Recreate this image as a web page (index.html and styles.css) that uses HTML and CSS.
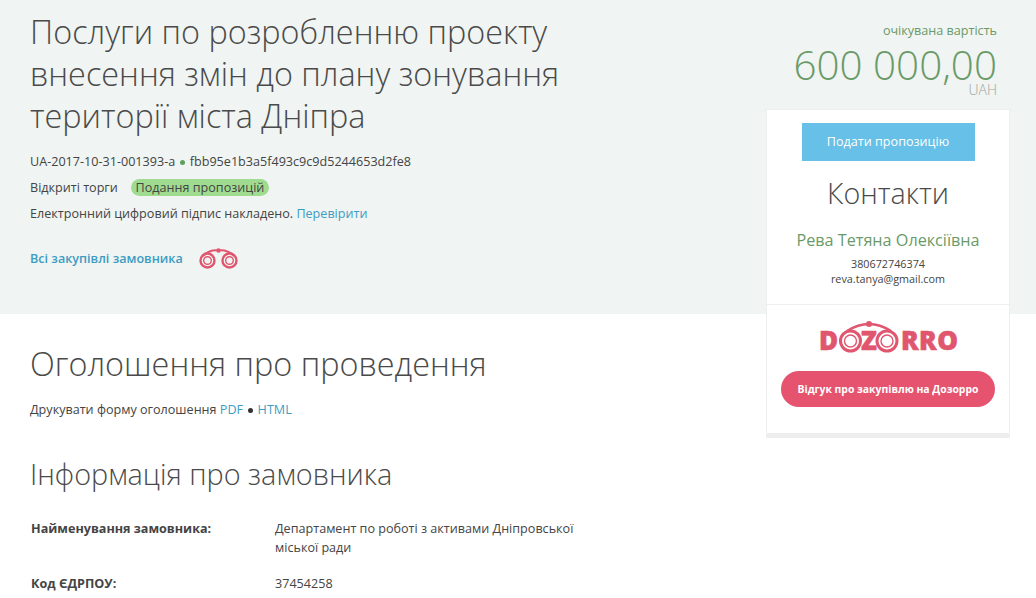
FILE: index.html
```html
<!DOCTYPE html>
<html lang="uk">
<head>
  <meta charset="UTF-8">
  <title>Послуги по розробленню проекту</title>
  <link rel="stylesheet" href="styles.css">
</head>
<body>

<header class="tender-head">
  <div class="tender-info">
    <h1>Послуги по розробленню проекту внесення змін до плану зонування території міста Дніпра</h1>
    <p class="line">UA-2017-10-31-001393-a <span class="dot"></span> fbb95e1b3a5f493c9c9d5244653d2fe8</p>
    <p class="line">Відкриті торги <span class="status">Подання пропозицій</span></p>
    <p class="line">Електронний цифровий підпис накладено. <a href="#">Перевірити</a></p>
    <p class="buyer-link">
      <a href="#">Всі закупівлі замовника</a>
      <svg class="bino" width="40" height="22" viewBox="0 0 40 22" fill="none" stroke="#e0566f">
        <path d="M4 9 C9 4 15 3 19.500 3.500 C24 3 30 4 35 9" stroke-width="2"/>
        <circle cx="19.500" cy="3.500" r="2.200" fill="#e0566f" stroke="none"/>
        <circle cx="8.500" cy="13.500" r="7" stroke-width="2.400"/>
        <circle cx="8.500" cy="13.500" r="3.800" stroke-width="1.400"/>
        <circle cx="30.500" cy="13.500" r="7" stroke-width="2.400"/>
        <circle cx="30.500" cy="13.500" r="3.800" stroke-width="1.400"/>
      </svg>
    </p>
  </div>

  <aside class="side">
    <div class="price">
      <div class="price-label">очікувана вартість</div>
      <div class="price-value">600 000,00</div>
      <div class="price-cur">UAH</div>
    </div>
    <div class="card">
      <div class="card-top">
        <a class="btn-blue" href="#">Подати пропозицію</a>
        <h2>Контакти</h2>
        <div class="contact-name">Рева Тетяна Олексіївна</div>
        <div class="contact-line">380672746374</div>
        <div class="contact-line">reva.tanya@gmail.com</div>
      </div>
      <div class="card-bottom">
        <svg class="logo" width="138" height="34" viewBox="0 0 138 34">
          <g class="logo-text">
            <text x="0" y="30">D</text>
            <text x="42" y="30">Z</text>
            <text class="logo-end" x="82" y="30">RRO</text>
          </g>
          <g fill="none" stroke="#e0566f">
            <path d="M28 11 C36 6 44 4 50 4 C56 4 64 6 72 11" stroke-width="2.400"/>
            <circle cx="31.500" cy="21" r="10" stroke-width="3"/>
            <circle cx="31.500" cy="21" r="6" stroke-width="1.400"/>
            <circle cx="68" cy="21" r="10" stroke-width="3"/>
            <circle cx="68" cy="21" r="6" stroke-width="1.400"/>
          </g>
          <circle cx="50" cy="4" r="3" fill="#e0566f"/>
        </svg>
        <a class="btn-pink" href="#">Відгук про закупівлю на Дозорро</a>
      </div>
    </div>
  </aside>
</header>

<main class="content">
  <h2 class="big">Оголошення про проведення</h2>
  <p class="print">Друкувати форму оголошення <a href="#">PDF</a> <span class="dot dark"></span> <a href="#">HTML</a></p>

  <h3 class="mid">Інформація про замовника</h3>
  <div class="row">
    <div class="row-label">Найменування замовника:</div>
    <div class="row-value">Департамент по роботі з активами Дніпровської міської ради</div>
  </div>
  <div class="row">
    <div class="row-label">Код ЄДРПОУ:</div>
    <div class="row-value">37454258</div>
  </div>
</main>

</body>
</html>
```

FILE: styles.css
```css
html, body {
  height: 100%;
  overflow: hidden;
}
body {
  margin: 0;
  font-family: "Open Sans", sans-serif;
  font-size: 12.6px;
  color: #444;
  background-color: #fff;
}
a {
  color: #3d9cc4;
  text-decoration: none;
}
.tender-head {
  display: flex;
  justify-content: space-between;
  align-items: flex-start;
  height: 314px;
  padding: 0 26px 0 30px;
  box-sizing: border-box;
  background-color: #f0f4f2;
}
.tender-info {
  width: 560px;
  padding-top: 10px;
}
.tender-info h1 {
  margin: 0 0 17px;
  font-size: 32.4px;
  font-weight: 300;
  line-height: 42px;
  color: #4a4a4a;
}
.line {
  margin: 0 0 8px;
  line-height: 18px;
}
.dot {
  display: inline-block;
  width: 5px;
  height: 5px;
  margin: 0 1.500px 1px;
  border-radius: 50%;
  background-color: #5ba25e;
}
.dot.dark {
  background-color: #333;
}
.status {
  margin-left: 10px;
  padding: 0 4.500px;
  border-radius: 9px;
  background-color: #a0dc90;
  display: inline-block;
  line-height: 17px;
}
.buyer-link {
  display: flex;
  align-items: center;
  gap: 16px;
  margin: 24px 0 0;
  font-weight: 600;
}
.side {
  width: 244px;
}
.price {
  text-align: right;
  padding: 22px 13px 0 0;
  color: #6a9a68;
}
.price-label {
  font-size: 12.6px;
  line-height: 18px;
}
.price-value {
  margin-top: 6px;
  font-size: 40.4px;
  font-weight: 300;
  line-height: 38px;
}
.price-cur {
  color: #9aa69c;
  font-size: 14px;
  font-weight: 300;
  line-height: 12px;
}
.card {
  margin-top: 13px;
  background-color: #fff;
  border: 1px solid #eeeeee;
  border-bottom-width: 5px;
  text-align: center;
}
.card-top {
  padding: 13px 0 18px;
  border-bottom: 1px solid #eee;
}
.btn-blue {
  display: block;
  width: 173px;
  margin: 0 auto;
  background-color: #66c0e8;
  color: #fff;
  line-height: 38px;
}
.card h2 {
  margin: 13px 0 17px;
  font-size: 28.7px;
  font-weight: 300;
  line-height: 38px;
  color: #4a4a4a;
}
.contact-name {
  margin-bottom: 5px;
  font-size: 16.2px;
  color: #6a9a68;
  line-height: 22px;
}
.contact-line {
  font-size: 10.8px;
  line-height: 15px;
}
.card-bottom {
  padding: 15px 14px 26px;
}
.logo {
  display: block;
  margin: 0 auto 17px;
  overflow: visible;
}
.logo-text text {
  font-family: "Open Sans", sans-serif;
  font-size: 26px;
  font-weight: 800;
  fill: #e0566f;
  stroke: #e0566f;
  stroke-width: 0.6px;
}
.logo-text .logo-end {
  letter-spacing: 0.5px;
}
.btn-pink {
  display: block;
  background-color: #e5536e;
  color: #fff;
  border-radius: 18px;
  font-size: 10.4px;
  font-weight: 700;
  line-height: 36px;
}
.content {
  padding: 0 30px;
}
.big {
  margin: 28px 0 0;
  font-size: 32.4px;
  font-weight: 300;
  line-height: 42px;
  color: #4a4a4a;
}
.print {
  margin: 17px 0 0;
  line-height: 18px;
}
.mid {
  margin: 36px 0 26px;
  font-size: 28.8px;
  font-weight: 300;
  line-height: 38px;
  color: #4a4a4a;
}
.row {
  display: flex;
  width: 560px;
  margin-top: 17px;
  line-height: 19px;
}
.row-label {
  width: 244px;
  font-weight: 700;
  padding-left: 1px;
}
.row-value {
  flex: 1;
}
```
